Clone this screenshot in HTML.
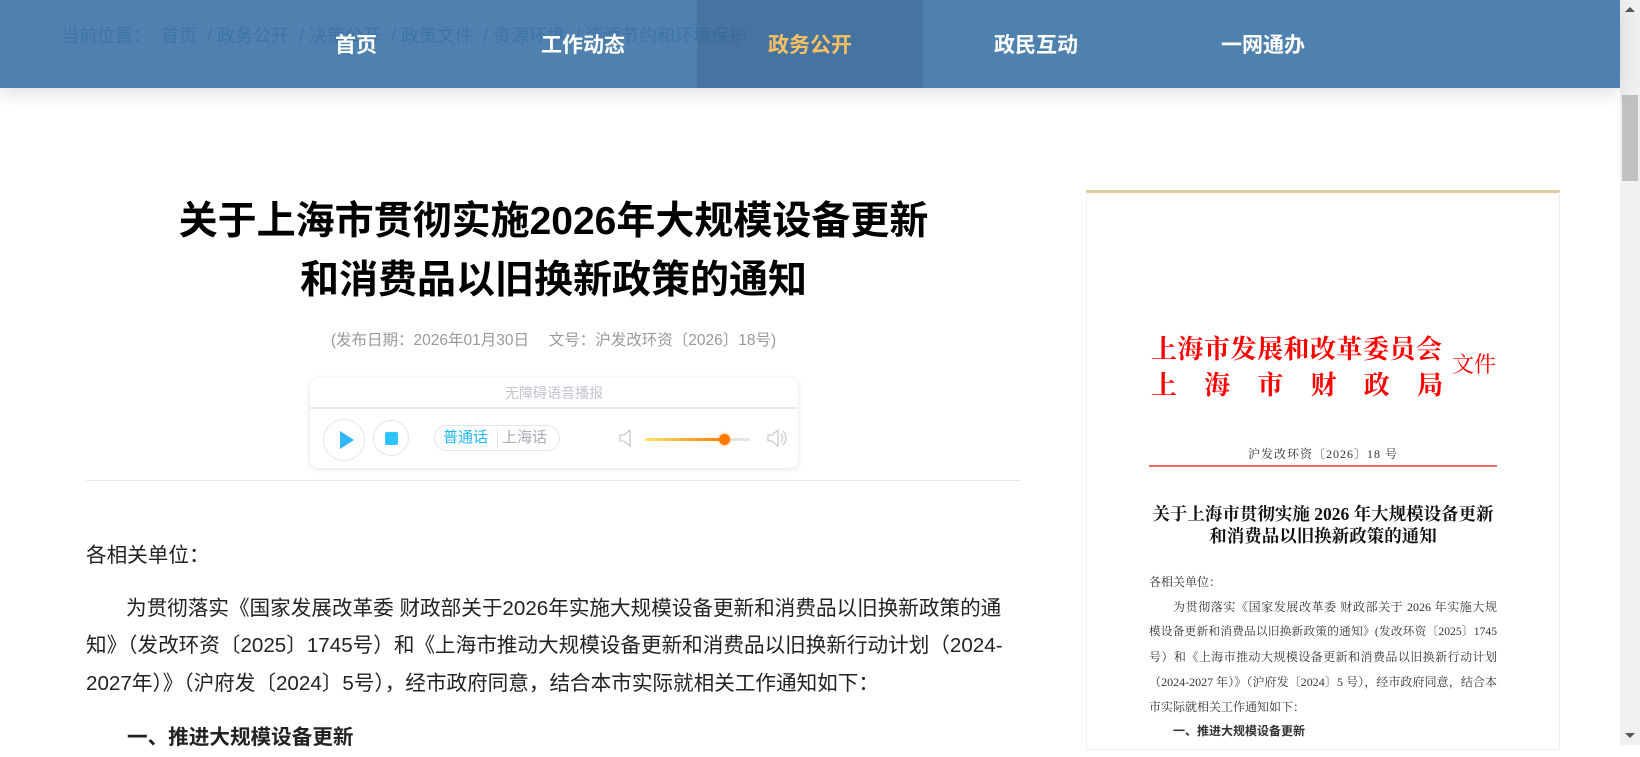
<!DOCTYPE html>
<html><head><meta charset="utf-8"><style>
*{margin:0;padding:0;box-sizing:border-box}
html,body{width:1640px;height:745px;overflow:hidden;background:#fff;font-family:"Liberation Sans","Noto Sans CJK SC",sans-serif;color:#333}
.crumb{position:absolute;left:61px;top:22px;font-size:18px;color:#1e3a58;z-index:1;white-space:nowrap}
.nav{position:absolute;left:0;top:0;width:1620px;height:88px;background:rgba(66,119,168,0.93);box-shadow:0 6px 18px rgba(0,0,0,.12);z-index:2}
.nav .it{position:absolute;top:0;height:88px;line-height:92px;font-size:21px;font-weight:bold;color:#fff;text-align:center;width:226px}
.nav .act{background:rgba(40,80,120,0.25);color:#f8c063}
.sb{position:absolute;left:1620px;top:0;width:20px;height:745px;background:#f0f0f0}
.sb .th{position:absolute;left:2px;top:95px;width:16px;height:86px;background:#c1c1c1}
.title{position:absolute;left:66px;width:975px;text-align:center;font-size:39px;font-weight:bold;color:#000;line-height:59px;top:192px}
.date{position:absolute;left:86px;width:935px;text-align:center;top:328px;font-size:15.5px;color:#999}
.aud{position:absolute;left:310px;top:378px;width:488px;height:90px;border-radius:8px;box-shadow:0 1px 6px rgba(0,0,0,.12);background:#fff}
.aud .hd{height:31px;border-bottom:2px solid #e3ebf3;text-align:center;font-size:14px;color:#c0c4d0;line-height:30px}
.circ{position:absolute;border:1px solid #e3e6ee;border-radius:50%;width:42px;height:42px}
.pill{position:absolute;left:124px;top:47px;width:126px;height:26px;border:1px solid #e3e6ee;border-radius:13px;font-size:15px;line-height:24px}
.hr{position:absolute;left:86px;top:480px;width:935px;height:1px;background:#e6e6e6}
.body{position:absolute;left:86px;top:537px;width:950px;font-size:20.6px;line-height:37.5px;color:#222;white-space:nowrap}
.doc{position:absolute;left:1086px;top:190px;width:474px;height:560px;border:1px solid #eee;border-top:3px solid #dccb9e;background:#fff}
.red{position:absolute;color:#f00;font-family:"Noto Serif CJK SC","Liberation Serif",serif;font-weight:bold}
.dt{font-family:"Liberation Serif","Noto Serif CJK SC",serif;}
.dl{position:absolute;left:62px;width:348px;font-size:12px;color:#333;white-space:nowrap;text-align:justify;text-align-last:justify}
</style></head><body>
<div class="crumb">当前位置：&nbsp; 首页 &nbsp;/ 政务公开 &nbsp;/ 决策公开 &nbsp;/ 政策文件 &nbsp;/ 资源环境 &nbsp;/ 资源节约和环境保护</div>
<div class="nav">
<div class="it" style="left:243px">首页</div>
<div class="it" style="left:470px">工作动态</div>
<div class="it act" style="left:697px">政务公开</div>
<div class="it" style="left:923px">政民互动</div>
<div class="it" style="left:1150px">一网通办</div>
</div>
<div class="sb"><div style="position:absolute;left:5px;top:7px;border:5px solid transparent;border-bottom:5px solid #555;border-top:0"></div><div class="th"></div><div style="position:absolute;left:5px;top:733px;border:5px solid transparent;border-top:5px solid #555;border-bottom:0"></div></div>

<div class="title">关于上海市贯彻实施2026年大规模设备更新<br>和消费品以旧换新政策的通知</div>
<div class="date">(发布日期：2026年01月30日　 文号：沪发改环资〔2026〕18号)</div>
<div class="aud">
<div class="hd">无障碍语音播报</div>
<div class="circ" style="left:13px;top:41px"><div style="position:absolute;left:16px;top:11px;border-left:14px solid #2fb8f5;border-top:9px solid transparent;border-bottom:9px solid transparent"></div></div>
<div class="circ" style="left:63px;top:42px;width:36px;height:36px"><div style="position:absolute;left:11px;top:11px;width:13px;height:13px;background:#2fc4ff;border-radius:2px"></div></div>
<div class="pill"><span style="position:absolute;left:8px;color:#22b8f0">普通话</span><span style="position:absolute;left:62px;top:2px;height:20px;border-left:1px solid #e3e6ee"></span><span style="position:absolute;left:67px;color:#a8acb8">上海话</span></div>
<svg style="position:absolute;left:308px;top:50px" width="16" height="20" viewBox="0 0 16 20"><path d="M2 7h4l6-5v16l-6-5H2z" fill="none" stroke="#ccc" stroke-width="1.3"/></svg>
<div style="position:absolute;left:335px;top:60px;width:105px;height:3px;background:#e6e6e6"></div>
<div style="position:absolute;left:335px;top:60px;width:80px;height:3px;background:linear-gradient(90deg,#ffe36b,#ff7a00)"></div>
<div style="position:absolute;left:409px;top:56px;width:11px;height:11px;border-radius:50%;background:#ff7a00;box-shadow:0 0 3px #ffa040"></div>
<svg style="position:absolute;left:456px;top:50px" width="22" height="20" viewBox="0 0 22 20"><path d="M2 7h4l6-5v16l-6-5H2z" fill="none" stroke="#ccc" stroke-width="1.3"/><path d="M15 6q3 4 0 8M17 3q6 7 0 14" fill="none" stroke="#ccc" stroke-width="1.3"/></svg>
</div>
<div class="hr"></div>
<div class="body">各相关单位：<br><div style="height:15px"></div>
<span style="padding-left:40px">为贯彻落实《国家发展改革委 财政部关于2026年实施大规模设备更新和消费品以旧换新政策的通</span><br>
知》（发改环资〔2025〕1745号）和《上海市推动大规模设备更新和消费品以旧换新行动计划（2024-<br>
2027年）》（沪府发〔2024〕5号），经市政府同意，结合本市实际就相关工作通知如下：<br>
<div style="height:17px"></div><b style="padding-left:41px">一、推进大规模设备更新</b></div>

<div class="doc">
<div class="red" style="left:64px;top:136px;font-size:26px;letter-spacing:0.5px;white-space:nowrap">上海市发展和改革委员会</div>
<div class="red" style="left:64px;top:172px;width:292px;font-size:26px;display:flex;justify-content:space-between"><span>上</span><span>海</span><span>市</span><span>财</span><span>政</span><span>局</span></div>
<div class="red" style="left:365px;top:155px;font-size:22px;font-weight:normal">文件</div>
<div class="dt" style="position:absolute;left:0;width:472px;text-align:center;top:252px;font-size:12px;letter-spacing:1px">沪发改环资〔2026〕18 号</div>
<div style="position:absolute;left:62px;top:272px;width:348px;height:2px;background:#f06a6a"></div>
<div class="dt" style="position:absolute;left:0;width:472px;text-align:center;top:310px;font-size:17.5px;font-weight:bold;line-height:22px;color:#111">关于上海市贯彻实施 2026 年大规模设备更新<br>和消费品以旧换新政策的通知</div>
<div class="dl dt" style="top:380px;text-align-last:left">各相关单位：</div>
<div class="dl dt" style="top:405px;padding-left:24px">为贯彻落实《国家发展改革委 财政部关于 2026 年实施大规</div>
<div class="dl dt" style="top:430px;font-size:11.6px">模设备更新和消费品以旧换新政策的通知》(发改环资〔2025〕1745</div>
<div class="dl dt" style="top:455px">号）和《上海市推动大规模设备更新和消费品以旧换新行动计划</div>
<div class="dl dt" style="top:480px">（2024-2027 年）》（沪府发〔2024〕5 号），经市政府同意，结合本</div>
<div class="dl dt" style="top:505px;text-align-last:left">市实际就相关工作通知如下：</div>
<div class="dl" style="top:529px;padding-left:24px;font-weight:bold;text-align-last:left">一、推进大规模设备更新</div>
</div>
</body></html>
